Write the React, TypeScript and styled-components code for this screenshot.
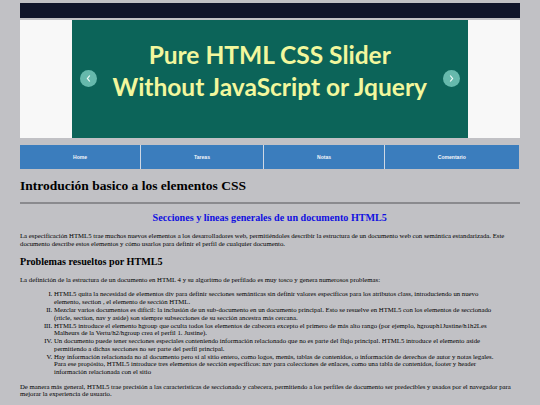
import React from 'react'
import styled, { createGlobalStyle } from 'styled-components'

const GlobalStyle = createGlobalStyle`
    html, body {
        margin: 0;
        height: 405px;
        overflow: hidden;
        background: #c1c1c5;
    }
`

const Page = styled.div`
    width: 499.5px;
    margin-left: 20px;
    padding-top: 3.4px;
    font-family: "Liberation Serif", "Times New Roman", serif;
    font-size: 6.75px;
    line-height: 7.76px;
    color: #000;
`

const TopBar = styled.div`
    height: 14.8px;
    background: #10152a;
`

const Slider = styled.div`
    margin-top: 1.8px;
    height: 118px;
    background: #f8f8f8;
    display: flex;
    justify-content: center;
`

const Slide = styled.div`
    position: relative;
    width: 396px;
    background: #0c6459;
    color: #f2f79d;
    font-family: Lato, "Open Sans", sans-serif;
    font-size: 24.5px;
    font-weight: 700;
    line-height: 32.8px;
    text-align: center;
    display: flex;
    flex-direction: column;
    justify-content: center;
    padding-bottom: 15px;
    box-sizing: border-box;
`

const Arrow = styled.div<{ $side: 'left' | 'right' }>`
    position: absolute;
    top: 50px;
    ${props => (props.$side === 'left' ? 'left: 8px;' : 'right: 8px;')}
    width: 17px;
    height: 17px;
    border-radius: 50%;
    background: #66b9ac;
    display: flex;
    align-items: center;
    justify-content: center;
`

const Nav = styled.nav`
    margin-top: 7px;
    width: 498.7px;
    background: #cfd8e4;
    display: grid;
    grid-template-columns: 120px 122px 120px 1fr;
    column-gap: 1px;
`

const NavItem = styled.a`
    height: 24px;
    background: #3b7dbd;
    color: #f4f6fa;
    font-family: "Liberation Sans", Arial, sans-serif;
    font-size: 5.06px;
    font-weight: 700;
    display: flex;
    align-items: center;
    justify-content: center;
    padding-top: 1px;
    box-sizing: border-box;
`

const Title = styled.h1`
    margin: 9px 0;
    font-size: 13.5px;
    line-height: 15.5px;
    font-weight: 700;
`

const Rule = styled.hr`
    margin: 0;
    border: 0;
    height: 1.2px;
    background: #8a8a8e;
`

const Subtitle = styled.h2`
    margin: 8.4px 0;
    font-size: 10.13px;
    line-height: 11.6px;
    font-weight: 700;
    color: #1010e0;
    text-align: center;
`

const Paragraph = styled.p`
    margin: 6.75px 0;
`

const Section = styled.h3`
    margin: 8.4px 0;
    font-size: 10.13px;
    line-height: 11.6px;
    font-weight: 700;
`

const List = styled.ol`
    margin: 6.75px 0;
    padding: 0 16px 0 34px;
    list-style-type: upper-roman;
`

const Chevron = ({ dir }: { dir: 'left' | 'right' }) => (
    <svg width="7" height="9" viewBox="0 0 7 9" fill="none" stroke="#f2fbf8" strokeWidth="1.2">
        <path d={dir === 'left' ? 'M4.8 1.5 L2.4 4.5 L4.8 7.5' : 'M2.2 1.5 L4.6 4.5 L2.2 7.5'} />
    </svg>
)

export default function App() {
    return (
        <Page>
            <GlobalStyle />
            <TopBar />
            <Slider>
                <Slide>
                    <div>Pure HTML CSS Slider</div>
                    <div>Without JavaScript or Jquery</div>
                    <Arrow $side="left"><Chevron dir="left" /></Arrow>
                    <Arrow $side="right"><Chevron dir="right" /></Arrow>
                </Slide>
            </Slider>
            <Nav>
                <NavItem>Home</NavItem>
                <NavItem>Tareas</NavItem>
                <NavItem>Notas</NavItem>
                <NavItem>Comentario</NavItem>
            </Nav>
            <Title>Introdución basico a los elementos CSS</Title>
            <Rule />
            <Subtitle>Secciones y líneas generales de un documento HTML5</Subtitle>
            <Paragraph>
                La especificación HTML5 trae muchos nuevos elementos a los desarrolladores web, permitiéndoles describir la estructura de un documento web con semántica estandarizada. Este documento describe estos elementos y cómo usarlos para definir el perfil de cualquier documento.
            </Paragraph>
            <Section>Problemas resueltos por HTML5</Section>
            <Paragraph>
                La definición de la estructura de un documento en HTML 4 y su algoritmo de perfilado es muy tosco y genera numerosos problemas:
            </Paragraph>
            <List>
                <li>HTML5 quita la necesidad de elementos div para definir secciones semánticas sin definir valores específicos para los atributos class, introduciendo un nuevo elemento, section , el elemento de sección HTML.</li>
                <li>Mezclar varios documentos es difícil: la inclusión de un sub-documento en un documento principal. Esto se resuelve en HTML5 con los elementos de seccionado (rticle, section, nav y aside) son siempre subsecciones de su sección ancestra más cercana.</li>
                <li>HTML5 introduce el elemento hgroup que oculta todos los elementos de cabecera excepto el primero de más alto rango (por ejemplo, hgrouph1Justine/h1h2Les Malheurs de la Vertu/h2/hgroup crea el perfil 1. Justine).</li>
                <li>Un documento puede tener secciones especiales conteniendo información relacionado que no es parte del flujo principal. HTML5 introduce el elemento aside permitiendo a dichas secciones no ser parte del perfil principal.</li>
                <li>Hay información relacionada no al documento pero sí al sitio entero, como logos, menús, tablas de contenidos, o información de derechos de autor y notas legales. Para ese propósito, HTML5 introduce tres elementos de sección específicos: nav para colecciones de enlaces, como una tabla de contenidos, footer y header información relacionada con el sitio</li>
            </List>
            <Paragraph>
                De manera más general, HTML5 trae precisión a las características de seccionado y cabecera, permitiendo a los perfiles de documento ser predecibles y usados por el navegador para mejorar la experiencia de usuario.
            </Paragraph>
            <Paragraph>
                Todos estos elementos de sección pueden ser anidados, cada uno tiene su propio perfil y su propia jerarquía de encabezados en el documento principal web.
            </Paragraph>
        </Page>
    )
}
